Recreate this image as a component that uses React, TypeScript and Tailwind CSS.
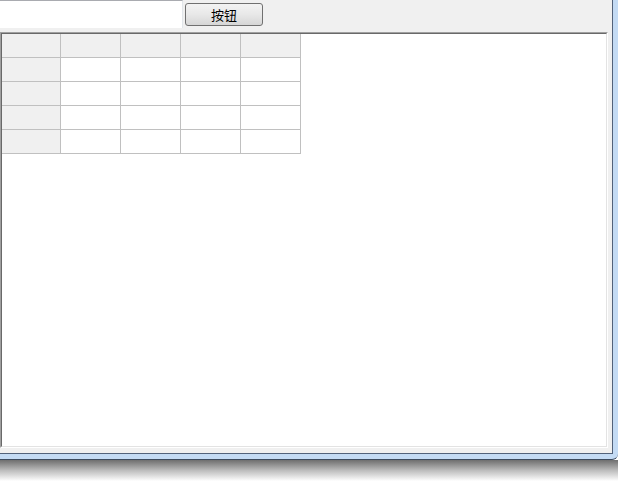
// App.tsx — a small Qt-style window: line edit, push button, table view

const COLS = 4;
const ROWS = 4;

function HeaderRow() {
  return (
    <div className="flex">
      <div className="w-[59px] h-[24px] bg-[#f0f0f0] border-r border-b border-[#c0c0c0]" />
      {Array.from({ length: COLS }).map((_, i) => (
        <div key={i} className="w-[60px] h-[24px] bg-[#f0f0f0] border-r border-b border-[#c0c0c0]" />
      ))}
    </div>
  );
}

function BodyRow() {
  return (
    <div className="flex">
      <div className="w-[59px] h-[24px] bg-[#f0f0f0] border-r border-b border-[#c0c0c0]" />
      {Array.from({ length: COLS }).map((_, i) => (
        <div key={i} className="w-[60px] h-[24px] bg-white border-r border-b border-[#c0c0c0]" />
      ))}
    </div>
  );
}

export default function App() {
  return (
    <div className="w-[618px] h-[481px] bg-white flex flex-col overflow-hidden font-['Noto_Sans_CJK_SC',sans-serif]">
      {/* window with blue frame */}
      <div className="w-[618px] h-[460px] shrink-0 bg-[#c4dbf4] border-b border-[#3d4b5e] rounded-br-[6px] flex">
        <div className="w-[613px] h-[454px] shrink-0 bg-[#f0f0f0] border-r border-b border-[#52627a] flex flex-col">
          {/* top bar */}
          <div className="h-[32px] shrink-0 flex items-start">
            <div className="w-[183px] h-[28px] bg-white border-t border-r border-t-[#a9abb0] border-r-[#e2e6ea]" />
            <button className="ml-[2px] mt-[3px] w-[78px] h-[23px] rounded-[3px] border border-[#707070] bg-gradient-to-b from-[#f3f3f3] via-[#e8e8e8] to-[#d6d6d6] text-[13px] leading-none text-black flex items-center justify-center">
              按钮
            </button>
          </div>
          {/* table view frame */}
          <div className="w-[608px] h-[416px] shrink-0 border border-t-[#a0a0a0] border-l-[#a0a0a0] border-r-white border-b-white">
            <div className="w-full h-full bg-white border border-t-[#696969] border-l-[#696969] border-r-[#e3e3e3] border-b-[#e3e3e3]">
              <HeaderRow />
              {Array.from({ length: ROWS }).map((_, r) => (
                <BodyRow key={r} />
              ))}
            </div>
          </div>
        </div>
      </div>
      {/* drop shadow */}
      <div className="h-[21px] shrink-0 bg-gradient-to-b from-[#6f6f6f] via-[#bdbdbd] to-white" />
    </div>
  );
}
